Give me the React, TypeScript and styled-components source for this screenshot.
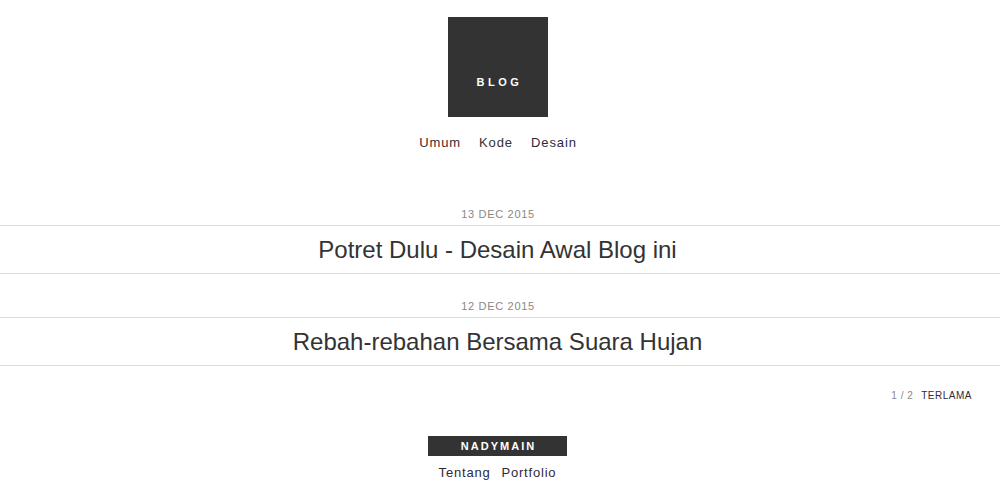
import React from "react";
import styled, { createGlobalStyle } from "styled-components";

const Global = createGlobalStyle`
  html, body { margin: 0; padding: 0; background: #fff; }
  body { font-family: "Liberation Sans", Arial, sans-serif; color: #333; }
  a { text-decoration: none; color: inherit; }
`;

const Page = styled.div`
  display: flex;
  flex-direction: column;
  align-items: stretch;
  width: 1000px;
`;

const Header = styled.header`
  display: flex;
  flex-direction: column;
  align-items: center;
  padding-top: 17px;
  padding-right: 4px;
`;

const Logo = styled.a`
  width: 100px;
  height: 100px;
  background: #333;
  color: #fff;
  display: flex;
  align-items: flex-end;
  justify-content: center;
  padding: 0 0 28px 3px;
  font-size: 11px;
  line-height: 13px;
  font-weight: bold;
  letter-spacing: 3.5px;
  box-sizing: border-box;
`;

const Nav = styled.nav`
  display: flex;
  gap: 18px;
  margin-top: 18px;
  font-size: 13px;
  line-height: 16px;
  letter-spacing: 0.9px;
`;

const NavLink = styled.a<{ $tone?: string }>`
  color: ${(p) => p.$tone || "#333"};
`;

const Posts = styled.main`
  margin-top: 56px;
  display: flex;
  flex-direction: column;
  gap: 25px;
`;

const Post = styled.article`
  display: flex;
  flex-direction: column;
  align-items: stretch;
`;

const PostDate = styled.div`
  text-align: center;
  font-size: 11px;
  line-height: 14px;
  letter-spacing: 0.7px;
  color: #888;
  margin-bottom: 4px;
  padding-right: 4px;
`;

const PostTitle = styled.h2`
  margin: 0;
  border-top: 1px solid #ddd;
  border-bottom: 1px solid #ddd;
  text-align: center;
  font-size: 24px;
  line-height: 47px;
  font-weight: normal;
  color: #333;
  padding-right: 5px;
`;

const Pager = styled.div`
  display: flex;
  justify-content: flex-end;
  gap: 8px;
  padding-right: 28px;
  margin-top: 24px;
  font-size: 10px;
  line-height: 12px;
  letter-spacing: 0.5px;
`;

const PageCount = styled.span`
  color: #888;
`;

const PageLink = styled.a`
  color: #2e2a3d;
`;

const Footer = styled.footer`
  margin-top: 34px;
  display: flex;
  flex-direction: column;
  align-items: center;
  padding-right: 5px;
`;

const Brand = styled.div`
  width: 139px;
  height: 20px;
  background: #333;
  color: #fff;
  display: flex;
  align-items: center;
  justify-content: center;
  font-size: 11px;
  font-weight: bold;
  letter-spacing: 2px;
  padding-left: 2px;
  box-sizing: border-box;
`;

const FooterNav = styled.nav`
  display: flex;
  gap: 11px;
  margin-top: 9px;
  font-size: 13px;
  line-height: 16px;
  letter-spacing: 0.8px;
`;

export default function App() {
  return (
    <Page>
      <Global />
      <Header>
        <Logo href="#">BLOG</Logo>
        <Nav>
          <NavLink $tone="#3d2a2e">Umum</NavLink>
          <NavLink $tone="#333">Kode</NavLink>
          <NavLink $tone="#2e2a3d">Desain</NavLink>
        </Nav>
      </Header>
      <Posts>
        <Post>
          <PostDate>13 DEC 2015</PostDate>
          <PostTitle>Potret Dulu - Desain Awal Blog ini</PostTitle>
        </Post>
        <Post>
          <PostDate>12 DEC 2015</PostDate>
          <PostTitle>Rebah-rebahan Bersama Suara Hujan</PostTitle>
        </Post>
      </Posts>
      <Pager>
        <PageCount>1 / 2</PageCount>
        <PageLink href="#">TERLAMA</PageLink>
      </Pager>
      <Footer>
        <Brand>NADYMAIN</Brand>
        <FooterNav>
          <NavLink $tone="#2e2a3d">Tentang</NavLink>
          <NavLink $tone="#2e2a3d">Portfolio</NavLink>
        </FooterNav>
      </Footer>
    </Page>
  );
}
